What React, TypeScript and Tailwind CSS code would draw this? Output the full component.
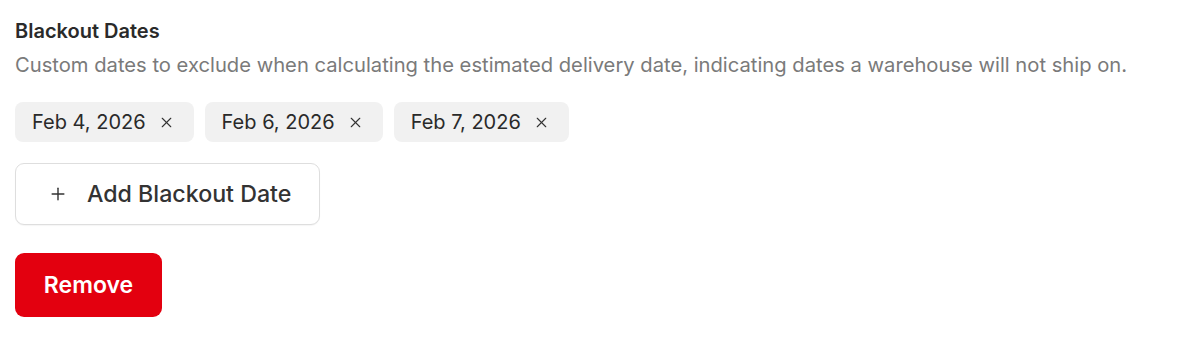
import { X, Plus } from 'lucide-react';

const DATES = ['Feb 4, 2026', 'Feb 6, 2026', 'Feb 7, 2026'];

export default function App() {
  return (
    <div
      className="min-h-[338px] bg-white px-[15px] pt-[19px] text-[#303030]"
      style={{ fontFamily: 'Inter, "Noto Sans", sans-serif' }}
    >
      <h2 className="text-[20px] leading-[24px] font-semibold text-[#2a2a2a]">Blackout Dates</h2>
      <p className="mt-[10px] text-[20.2px] leading-[24px] text-[#7a7a7a]">
        Custom dates to exclude when calculating the estimated delivery date, indicating dates a warehouse will not ship on.
      </p>

      <div className="mt-[25px] flex gap-[11px]">
        {DATES.map((d) => (
          <span
            key={d}
            className="flex h-[40px] items-center gap-[12px] rounded-[8px] bg-[#f1f1f1] pl-[17px] pr-[19px] text-[20px] text-[#2a2a2a]"
          >
            {d}
            <X size={17} strokeWidth={1.6} className="text-[#333]" />
          </span>
        ))}
      </div>

      <button
        type="button"
        className="mt-[21px] flex h-[62px] w-[305px] items-center gap-[19px] rounded-[9px] border border-[#dedede] bg-white pl-[32px] text-[23.2px] font-medium text-[#333] shadow-[0_1px_1px_rgba(0,0,0,0.04)]"
      >
        <Plus size={20} strokeWidth={1.7} />
        Add Blackout Date
      </button>

      <button
        type="button"
        className="mt-[28px] flex h-[64px] w-[147px] items-center justify-center rounded-[9px] bg-[#e3000f] text-[23px] font-semibold text-white"
      >
        Remove
      </button>
    </div>
  );
}
